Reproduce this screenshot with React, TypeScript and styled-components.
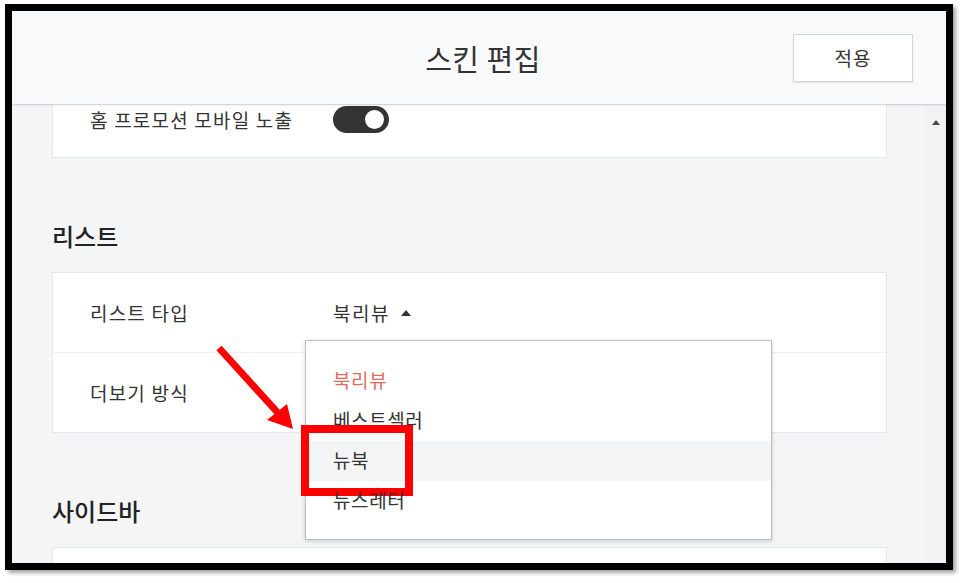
import styled, { createGlobalStyle } from 'styled-components';

const GlobalStyle = createGlobalStyle`
    body {
        margin: 0;
        background: #ffffff;
        font-family: 'Noto Sans CJK KR', 'Noto Sans', sans-serif;
        color: #333333;
    }
`;

const Page = styled.div`
    width: 966px;
    height: 583px;
    box-sizing: border-box;
    padding: 4px 0 0 5px;
`;

const Frame = styled.div`
    width: 948px;
    height: 566px;
    box-sizing: border-box;
    border: 7px solid #000000;
    box-shadow: 3px 3px 4px rgba(0, 0, 0, 0.35);
    display: flex;
    flex-direction: column;
    overflow: hidden;
`;

const Header = styled.header`
    flex: 0 0 94px;
    box-sizing: border-box;
    display: grid;
    grid-template-columns: 1fr auto 1fr;
    align-items: center;
    padding: 0 33px;
    background: #f8f9fa;
    border-bottom: 1px solid #d4d5d8;
    box-shadow: 0 1px 2px rgba(0, 0, 0, 0.06);
    position: relative;
    z-index: 3;
`;

const Title = styled.h1`
    grid-column: 2;
    margin: 0;
    padding-left: 8px;
    font-size: 29px;
    font-weight: 400;
    letter-spacing: 0.5px;
    line-height: 36px;
    color: #333333;
`;

const ApplyButton = styled.button`
    grid-column: 3;
    justify-self: end;
    width: 120px;
    height: 48px;
    background: #ffffff;
    border: 1px solid #d3d4d6;
    box-shadow: 0 1px 1px rgba(0, 0, 0, 0.08);
    font-family: inherit;
    font-size: 19px;
    letter-spacing: 1px;
    color: #333333;
    cursor: pointer;
`;

const Body = styled.div`
    flex: 1;
    display: flex;
    min-height: 0;
    overflow: hidden;
    background: #f4f5f7;
`;

const Scroller = styled.div`
    flex: 1;
    padding: 0 38px 0 40px;
    overflow: hidden;
`;

const Content = styled.div`
    margin-top: -24px;
`;

const ScrollTrack = styled.div`
    flex: 0 0 21px;
    display: flex;
    justify-content: center;
    padding-top: 15px;
    background: #f1f2f3;
`;

const ScrollArrow = styled.span`
    width: 0;
    height: 0;
    border-left: 4px solid transparent;
    border-right: 4px solid transparent;
    border-bottom: 5px solid #4a4a4a;
`;

const Card = styled.div`
    background: #ffffff;
    border: 1px solid #e6e7ea;
`;

const Row = styled.div<{ $height?: number }>`
    height: ${(p) => p.$height ?? 79}px;
    display: flex;
    align-items: center;
    padding-left: 37px;

    & + & {
        border-top: 1px solid #eef0f2;
    }
`;

const Label = styled.span`
    flex: 0 0 243px;
    font-size: 19px;
    letter-spacing: 1.2px;
    line-height: 26px;
    color: #333333;
`;

const Toggle = styled.span<{ $on: boolean }>`
    width: 56px;
    height: 27px;
    box-sizing: border-box;
    border-radius: 14px;
    background: ${(p) => (p.$on ? '#333333' : '#cccccc')};
    display: flex;
    align-items: center;
    justify-content: ${(p) => (p.$on ? 'flex-end' : 'flex-start')};
    padding: 0 5px;

    &::after {
        content: '';
        width: 19px;
        height: 19px;
        border-radius: 50%;
        background: #ffffff;
    }
`;

const SectionTitle = styled.h2`
    margin: 62px 0 20px;
    font-size: 24px;
    font-weight: 500;
    line-height: 32px;
    color: #222222;
`;

const Select = styled.span`
    position: relative;
    display: inline-flex;
    align-items: center;
    gap: 11px;
    font-size: 19px;
    letter-spacing: 1.5px;
    line-height: 26px;
    color: #333333;
`;

const Caret = styled.span`
    width: 0;
    height: 0;
    border-left: 5px solid transparent;
    border-right: 5px solid transparent;
    border-bottom: 6px solid #333333;
`;

const Menu = styled.ul`
    position: absolute;
    top: calc(100% + 14px);
    left: -28px;
    z-index: 2;
    width: 467px;
    box-sizing: border-box;
    margin: 0;
    padding: 20px 0 18px;
    list-style: none;
    letter-spacing: 0.6px;
    background: #ffffff;
    border: 1px solid #bdbec0;
    box-shadow: 0 1px 4px rgba(0, 0, 0, 0.18);
`;

const MenuItem = styled.li<{ $active?: boolean; $hover?: boolean }>`
    position: relative;
    height: 40px;
    line-height: 38px;
    padding-left: 27px;
    font-size: 19px;
    color: ${(p) => (p.$active ? '#e06a5c' : '#333333')};
    background: ${(p) => (p.$hover ? '#f3f4f5' : 'transparent')};
`;

const Highlight = styled.span`
    position: absolute;
    left: -5px;
    top: -16px;
    width: 112px;
    height: 71px;
    box-sizing: border-box;
    border: 8px solid #ff0000;
    pointer-events: none;
`;

const Pointer = styled.svg`
    position: absolute;
    left: -96px;
    top: -102px;
    pointer-events: none;
`;

const menuItems = ['북리뷰', '베스트셀러', '뉴북', '뉴스레터'];

const App = () => {
    const selected = '북리뷰';
    const hovered = '뉴북';

    return (
        <Page>
            <GlobalStyle />
            <Frame>
                <Header>
                    <Title>스킨 편집</Title>
                    <ApplyButton>적용</ApplyButton>
                </Header>
                <Body>
                    <Scroller>
                        <Content>
                            <Card>
                                <Row $height={75}>
                                    <Label>홈 프로모션 모바일 노출</Label>
                                    <Toggle $on />
                                </Row>
                            </Card>

                            <SectionTitle>리스트</SectionTitle>
                            <Card>
                                <Row>
                                    <Label>리스트 타입</Label>
                                    <Select>
                                        {selected}
                                        <Caret />
                                        <Menu>
                                            {menuItems.map((item) => (
                                                <MenuItem
                                                    key={item}
                                                    $active={item === selected}
                                                    $hover={item === hovered}
                                                >
                                                    {item}
                                                    {item === hovered && (
                                                        <>
                                                            <Highlight />
                                                            <Pointer
                                                                width="95"
                                                                height="95"
                                                                viewBox="0 0 95 95"
                                                            >
                                                                <line
                                                                    x1="9"
                                                                    y1="9"
                                                                    x2="68"
                                                                    y2="74"
                                                                    stroke="#ff0000"
                                                                    strokeWidth="7"
                                                                />
                                                                <polygon
                                                                    points="83,90 57,81 77,65"
                                                                    fill="#ff0000"
                                                                />
                                                            </Pointer>
                                                        </>
                                                    )}
                                                </MenuItem>
                                            ))}
                                        </Menu>
                                    </Select>
                                </Row>
                                <Row>
                                    <Label>더보기 방식</Label>
                                </Row>
                            </Card>

                            <SectionTitle>사이드바</SectionTitle>
                            <Card>
                                <Row />
                            </Card>
                        </Content>
                    </Scroller>
                    <ScrollTrack>
                        <ScrollArrow />
                    </ScrollTrack>
                </Body>
            </Frame>
        </Page>
    );
};

export default App;
